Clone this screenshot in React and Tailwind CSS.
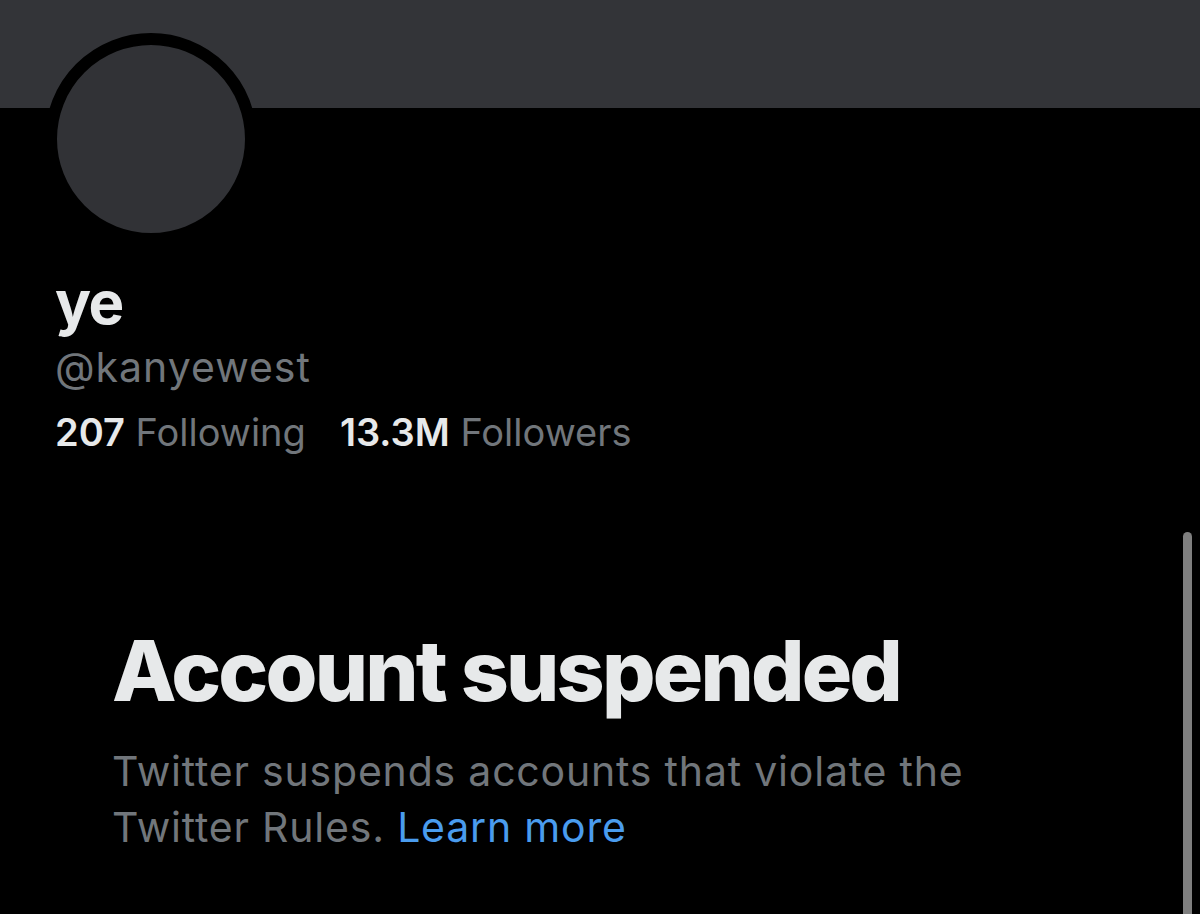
import React from "react";

export default function App() {
  return (
    <div
      className="relative w-[1200px] h-[914px] overflow-hidden bg-black"
      style={{ fontFamily: "Inter, 'Liberation Sans', sans-serif" }}
    >
      <div className="h-[108px] bg-[#333438]" />
      <div className="ml-[45px] -mt-[75px] relative w-[212px] h-[212px] rounded-full border-[12px] border-black bg-[#313236]" />

      <div className="pl-[55px]">
        <div className="mt-[25px] text-[60px] leading-[64px] font-bold text-[#e7e9ea] tracking-[-1.5px]">ye</div>
        <div className="mt-[9px] text-[41px] leading-[48px] text-[#71767b] tracking-[1px]">@kanyewest</div>
        <div className="mt-[19px] text-[38px] leading-[44px] text-[#71767b] flex">
          <span>
            <span className="font-semibold text-[#e7e9ea]">207</span> Following
          </span>
          <span className="ml-[34px]">
            <span className="font-semibold text-[#e7e9ea]">13.3M</span> Followers
          </span>
        </div>
      </div>

      <div className="pl-[112px]">
        <div className="mt-[169px] text-[84px] leading-[96px] font-extrabold text-[#e7e9ea] tracking-[-2.8px]">
          Account suspended
        </div>
        <div className="mt-[24px] text-[41px] leading-[56px] text-[#71767b] tracking-[0.8px]">
          <div>Twitter suspends accounts that violate the</div>
          <div>
            Twitter Rules. <span className="text-[#4a9cee]">Learn more</span>
          </div>
        </div>
      </div>

      <div className="absolute left-[1183px] top-[532px] w-[9px] h-[400px] rounded-full bg-[#7f7f7f]" />
    </div>
  );
}
